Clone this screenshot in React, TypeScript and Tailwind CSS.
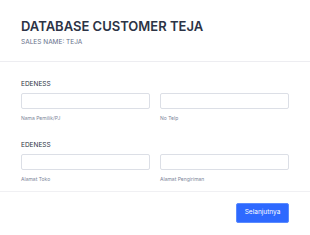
import React from "react";

function Field({ label }: { label: string }) {
  return (
    <div className="flex flex-col">
      <div className="h-[16px] rounded-[2px] border border-[#dcdfe6] bg-white" />
      <div className="mt-[6px] text-[5px] leading-[6px] text-[#7d869a]">{label}</div>
    </div>
  );
}

function Section({ a, b }: { a: string; b: string }) {
  return (
    <div className="flex flex-col">
      <div className="text-[6.5px] leading-[8px] font-normal text-[#2c3345]">EDENESS</div>
      <div className="mt-[5px] grid grid-cols-2 gap-x-[10px]">
        <Field label={a} />
        <Field label={b} />
      </div>
    </div>
  );
}

export default function App() {
  return (
    <div
      className="w-[310px] h-[235px] bg-white flex flex-col overflow-hidden"
      style={{ fontFamily: "Inter, 'Noto Sans', sans-serif" }}
    >
      <div className="h-[62px] border-b border-[#ededf1] px-[21px] pt-[19.5px]">
        <div className="text-[13px] leading-[13px] font-semibold text-[#2c3345]">
          DATABASE CUSTOMER TEJA
        </div>
        <div className="mt-[5.5px] text-[6.5px] leading-[8px] text-[#66708a]">SALES NAME: TEJA</div>
      </div>
      <div className="h-[130px] border-b border-[#f0f0f3] px-[21px] pt-[18px] flex flex-col gap-[20px]">
        <Section a="Nama Pemilik/PJ" b="No Telp" />
        <Section a="Alamat Toko" b="Alamat Pengiriman" />
      </div>
      <div className="flex-1 bg-white px-[21px] pt-[11px] flex justify-end items-start">
        <button className="h-[20px] w-[53px] rounded-[2px] border border-[#5a8bff] bg-[#2e69ff] text-[6.5px] text-white">
          Selanjutnya
        </button>
      </div>
    </div>
  );
}
